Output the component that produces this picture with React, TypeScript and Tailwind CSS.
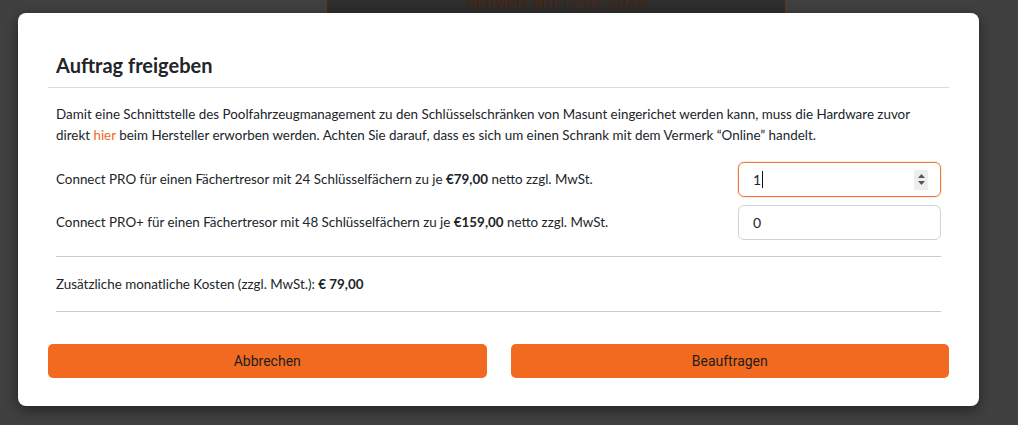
export default function App() {
  return (
    <div
      className="relative h-[425px] w-[1018px] overflow-hidden bg-[#404040]"
      style={{ fontFamily: 'Lato, "Open Sans", sans-serif' }}
    >
      {/* page behind overlay */}
      <div className="absolute left-[327px] top-[-20px] flex h-[33px] w-[458px] items-end justify-center border-x border-[#4a2814] bg-[#2e2e2e]">
        <span className="pb-[2px] text-[17px] leading-none text-[#4a2410]" style={{ fontFamily: '"Liberation Sans Narrow", "Roboto", sans-serif' }}>
          Aktiviert am 19.02.2025
        </span>
      </div>

      <div className="relative pl-[18px] pt-[13px]">
        <div className="flex h-[393px] w-[961px] flex-col rounded-lg bg-white shadow-[0_4px_14px_rgba(0,0,0,0.45)]">
          {/* header */}
          <div className="mx-[30px] mt-[40px] border-b border-[#dcdcdc] pb-[10px] pl-[8px]">
            <h2 className="text-[20px] font-bold leading-[24px] text-[#212529]">Auftrag freigeben</h2>
          </div>

          {/* body */}
          <div className="mx-[38px] pt-[16px] text-[13.4px] text-[#212529]">
            <p className="leading-[21px]">
              Damit eine Schnittstelle des Poolfahrzeugmanagement zu den Schlüsselschränken von Masunt eingerichet werden kann, muss die Hardware zuvor direkt{' '}
              <a className="text-[#f26a1f]">hier</a> beim Hersteller erworben werden. Achten Sie darauf, dass es sich um einen Schrank mit dem Vermerk “Online” handelt.
            </p>

            <div className="mt-[16px] flex items-center justify-between">
              <span>
                Connect PRO für einen Fächertresor mit 24 Schlüsselfächern zu je <b>€79,00</b> netto zzgl. MwSt.
              </span>
              <div className="flex h-[35px] w-[203px] items-center justify-between rounded-[6px] border border-[#ea7a3a] pl-[14px] pr-[12px] shadow-[0_0_0_1px_rgba(242,106,31,0.15)]">
                <span className="flex items-center text-[14px] text-[#212529]">
                  1<span className="ml-[1px] inline-block h-[17px] w-px bg-[#111]" />
                </span>
                <span className="flex h-[20px] w-[14px] flex-col items-center justify-center gap-[3px] bg-[#eeeeee]">
                  <svg width="7" height="4" viewBox="0 0 7 4"><path d="M0 4L3.5 0L7 4Z" fill="#555" /></svg>
                  <svg width="7" height="4" viewBox="0 0 7 4"><path d="M0 0L3.5 4L7 0Z" fill="#555" /></svg>
                </span>
              </div>
            </div>

            <div className="mt-[8px] flex items-center justify-between">
              <span>
                Connect PRO+ für einen Fächertresor mit 48 Schlüsselfächern zu je <b>€159,00</b> netto zzgl. MwSt.
              </span>
              <div className="flex h-[35px] w-[203px] items-center rounded-[6px] border border-[#cfd4da] pl-[14px]">
                <span className="text-[14px] text-[#212529]">0</span>
              </div>
            </div>

            <div className="mt-[16px] border-t border-[#cccccc]" />
            <div className="flex h-[54px] items-center">
              <span>
                Zusätzliche monatliche Kosten (zzgl. MwSt.): <b>€ 79,00</b>
              </span>
            </div>
            <div className="border-t border-[#cccccc]" />
          </div>

          {/* buttons */}
          <div className="mx-[30px] mt-[32px] grid grid-cols-2 gap-[24px]">
            <button className="h-[34px] rounded-[5px] bg-[#f26a1f] text-[14px] text-[#1e1e1e]" style={{ fontFamily: '"Liberation Sans Narrow", "Roboto", sans-serif' }}>
              Abbrechen
            </button>
            <button className="h-[34px] rounded-[5px] bg-[#f26a1f] text-[14px] text-[#1e1e1e]" style={{ fontFamily: '"Liberation Sans Narrow", "Roboto", sans-serif' }}>
              Beauftragen
            </button>
          </div>
        </div>
      </div>
    </div>
  );
}
